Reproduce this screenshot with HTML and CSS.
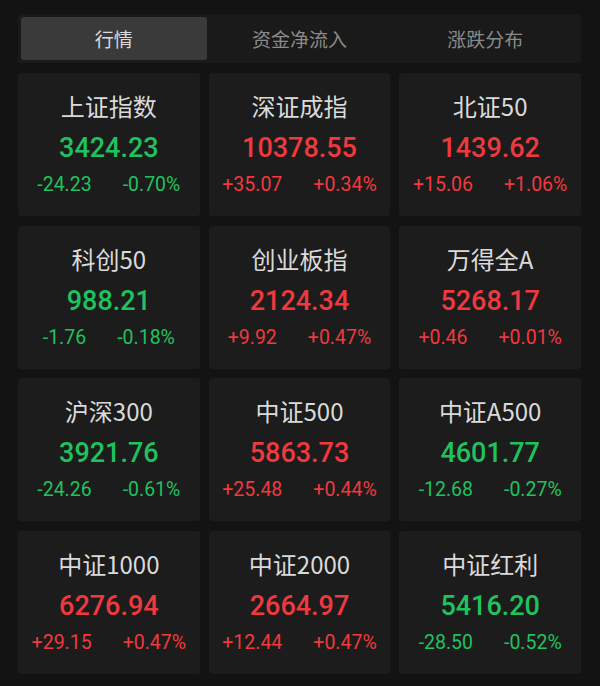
FILE: index.html
```html
<!DOCTYPE html>
<html lang="zh">
<head>
<meta charset="utf-8">
<link rel="stylesheet" href="styles.css">
</head>
<body>
<div class="page">
  <div class="tabs">
    <div class="tab active">行情</div>
    <div class="tab">资金净流入</div>
    <div class="tab">涨跌分布</div>
  </div>
  <div class="grid">
    <div class="card down"><div class="name">上证指数</div><div class="price">3424.23</div><div class="chg"><span>-24.23</span><span>-0.70%</span></div></div>
    <div class="card up"><div class="name">深证成指</div><div class="price">10378.55</div><div class="chg"><span>+35.07</span><span>+0.34%</span></div></div>
    <div class="card up"><div class="name">北证50</div><div class="price">1439.62</div><div class="chg"><span>+15.06</span><span>+1.06%</span></div></div>
    <div class="card down"><div class="name">科创50</div><div class="price">988.21</div><div class="chg"><span>-1.76</span><span>-0.18%</span></div></div>
    <div class="card up"><div class="name">创业板指</div><div class="price">2124.34</div><div class="chg"><span>+9.92</span><span>+0.47%</span></div></div>
    <div class="card up"><div class="name">万得全A</div><div class="price">5268.17</div><div class="chg"><span>+0.46</span><span>+0.01%</span></div></div>
    <div class="card down"><div class="name">沪深300</div><div class="price">3921.76</div><div class="chg"><span>-24.26</span><span>-0.61%</span></div></div>
    <div class="card up"><div class="name">中证500</div><div class="price">5863.73</div><div class="chg"><span>+25.48</span><span>+0.44%</span></div></div>
    <div class="card down"><div class="name">中证A500</div><div class="price">4601.77</div><div class="chg"><span>-12.68</span><span>-0.27%</span></div></div>
    <div class="card up"><div class="name">中证1000</div><div class="price">6276.94</div><div class="chg"><span>+29.15</span><span>+0.47%</span></div></div>
    <div class="card up"><div class="name">中证2000</div><div class="price">2664.97</div><div class="chg"><span>+12.44</span><span>+0.47%</span></div></div>
    <div class="card down"><div class="name">中证红利</div><div class="price">5416.20</div><div class="chg"><span>-28.50</span><span>-0.52%</span></div></div>
  </div>
</div>
</body>
</html>
```
FILE: styles.css
```css
html, body {
  margin: 0;
  padding: 0;
  background: #131313;
}
.page {
  width: 600px;
  height: 686px;
  box-sizing: border-box;
  padding: 14px 19px 0 18px;
  font-family: "Noto Sans CJK SC", "Noto Sans", sans-serif;
}
.tabs {
  display: flex;
  height: 49px;
  box-sizing: border-box;
  padding: 3px;
  background: #1a1a1a;
  border-radius: 4px;
}
.tab {
  flex: 1;
  display: flex;
  align-items: center;
  justify-content: center;
  font-size: 19px;
  color: #8a8a8a;
  border-radius: 3px;
}
.tab.active {
  background: #3a3a3a;
  color: #dcdcdc;
}
.grid {
  margin-top: 10px;
  display: grid;
  grid-template-columns: repeat(3, 1fr);
  grid-template-rows: repeat(4, 143px);
  column-gap: 9px;
  row-gap: 9.7px;
}
.card {
  background: #1c1c1c;
  border-radius: 3px;
  display: flex;
  flex-direction: column;
  align-items: center;
}
.name {
  margin-top: 16px;
  height: 34px;
  line-height: 34px;
  font-size: 24px;
  color: #dadada;
}
.price {
  margin-top: 8px;
  height: 34px;
  line-height: 34px;
  font-family: Roboto, "Noto Sans", sans-serif;
  font-weight: 500;
  font-size: 27px;
}
.chg {
  margin-top: 8px;
  display: flex;
  gap: 31px;
  height: 24px;
  line-height: 24px;
  font-family: Roboto, "Noto Sans", sans-serif;
  font-size: 19.5px;
}
.up .price, .up .chg { color: #f0393e; }
.down .price, .down .chg { color: #1fc25e; }
```
